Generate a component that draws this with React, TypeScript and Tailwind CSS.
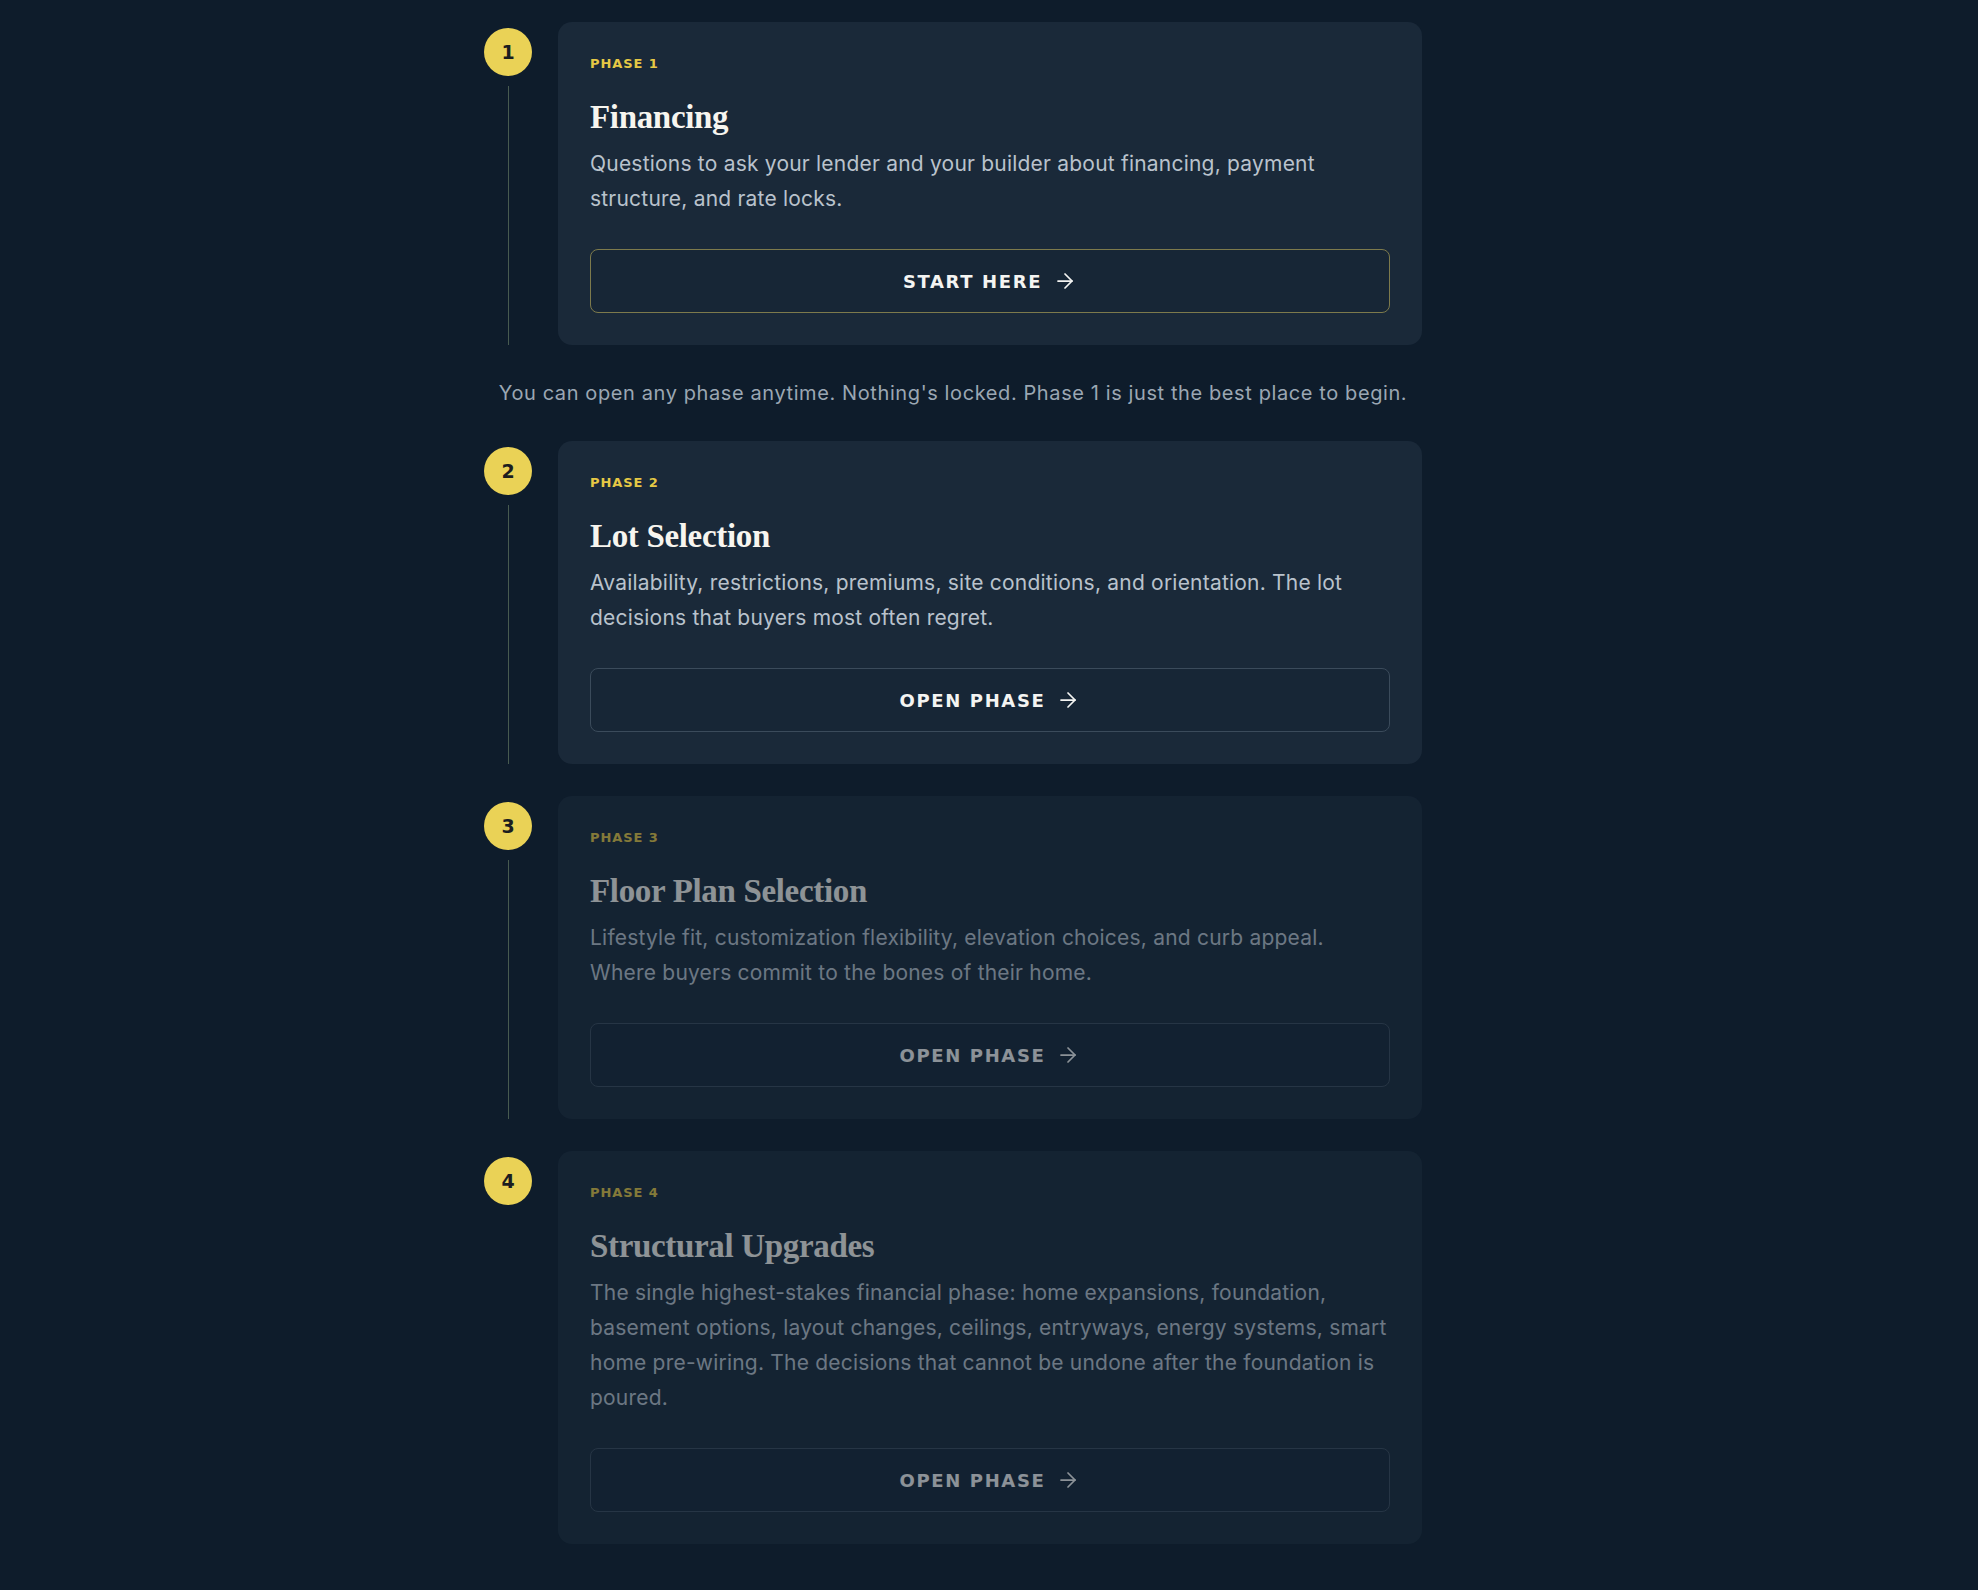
import { ArrowRight } from "lucide-react";

const PHASES = [
  {
    n: 1,
    title: "Financing",
    text: "Questions to ask your lender and your builder about financing, payment structure, and rate locks.",
    cta: "START HERE",
  },
  {
    n: 2,
    title: "Lot Selection",
    text: "Availability, restrictions, premiums, site conditions, and orientation. The lot decisions that buyers most often regret.",
    cta: "OPEN PHASE",
  },
  {
    n: 3,
    title: "Floor Plan Selection",
    text: "Lifestyle fit, customization flexibility, elevation choices, and curb appeal. Where buyers commit to the bones of their home.",
    cta: "OPEN PHASE",
  },
  {
    n: 4,
    title: "Structural Upgrades",
    text: "The single highest-stakes financial phase: home expansions, foundation, basement options, layout changes, ceilings, entryways, energy systems, smart home pre-wiring. The decisions that cannot be undone after the foundation is poured.",
    cta: "OPEN PHASE",
  },
];

type Phase = (typeof PHASES)[number];

function PhaseRow({ phase, last }: { phase: Phase; last?: boolean }) {
  const dim = phase.n > 2;
  const primary = phase.n === 1;
  return (
    <div className="flex gap-[26px]">
      {/* step marker + timeline */}
      <div className="flex w-12 shrink-0 flex-col items-center pt-[6px]">
        <div className="flex h-12 w-12 items-center justify-center rounded-full bg-[#ead256] font-['DejaVu_Sans',sans-serif] text-[19px] font-bold text-[#1b1d1f]">
          {phase.n}
        </div>
        {!last && <div className="mt-[10px] w-px flex-1 bg-[#475a50]" />}
      </div>

      {/* card */}
      <div className={`flex-1 rounded-[14px] bg-[#1a2939] p-8 ${dim ? "opacity-55" : ""}`}>
        <div className="font-['DejaVu_Sans',sans-serif] text-[13px] leading-[20px] font-bold tracking-[0.07em] text-[#e6c845]">
          PHASE {phase.n}
        </div>
        <h2 className="mt-[23px] font-['Liberation_Serif',serif] text-[33px] leading-[40px] font-bold tracking-[-0.01em] text-[#f7f5ef]">
          {phase.title}
        </h2>
        <p className="mt-[9px] font-['Inter',sans-serif] text-[21px] leading-[35px] tracking-[0.01em] text-[#b9c2cc]">
          {phase.text}
        </p>
        <button
          className={`mt-[33px] flex h-16 w-full items-center justify-center gap-[15px] rounded-lg border bg-[#172636] font-['DejaVu_Sans',sans-serif] text-[18px] font-bold tracking-[0.09em] text-[#f4f4f2] ${
            primary ? "border-[#7d7a4c]" : "border-[#3b4b5b]"
          }`}
        >
          <span>{phase.cta}</span>
          <ArrowRight size={24} strokeWidth={1.75} className="-ml-[4px]" />
        </button>
      </div>
    </div>
  );
}

export default function App() {
  return (
    <div className="min-h-screen bg-[#0e1c2b]">
      <div className="ml-[484px] w-[938px] pt-[22px] pb-[45px]">
        <PhaseRow phase={PHASES[0]} />

        <p className="mt-[34px] mb-[34px] text-center font-['Inter',sans-serif] text-[20px] leading-[28px] tracking-[0.03em] text-[#9ba7b3]">
          You can open any phase anytime. Nothing's locked. Phase 1 is just the best place to begin.
        </p>

        <div className="flex flex-col gap-8">
          <PhaseRow phase={PHASES[1]} />
          <PhaseRow phase={PHASES[2]} />
          <PhaseRow phase={PHASES[3]} last />
        </div>
      </div>
    </div>
  );
}
